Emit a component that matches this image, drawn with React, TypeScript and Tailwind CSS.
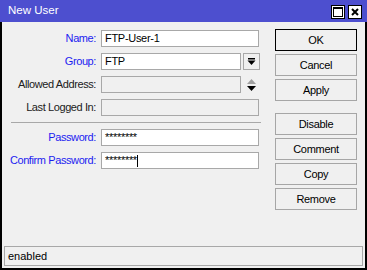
import React from "react"

const font = { fontFamily: '"Liberation Sans", Arial, sans-serif' }

function Field({
  label,
  blue,
  value,
  disabled,
  trailing,
  caret,
}: {
  label: string
  blue?: boolean
  value?: string
  disabled?: boolean
  trailing?: React.ReactNode
  caret?: boolean
}) {
  return (
    <div className="flex items-center h-[17px]">
      <div
        className={`w-[97px] pr-[3px] text-right text-[11px] tracking-[-0.4px] ${
          blue ? "text-[#1c1cf0]" : "text-[#202020]"
        }`}
      >
        {label}:
      </div>
      <div className="flex items-center ml-[2px] gap-[2px]">
        <div
          className={`h-[17px] ${trailing ? "w-[140px]" : "w-[158px]"} border border-[#a8a8a8] flex items-center px-[3px] text-[11px] tracking-[-0.3px] text-black ${
            disabled ? "bg-[#f0f0f0]" : "bg-white"
          }`}
        >
          <span>{value}</span>
          {caret && <span className="inline-block w-px h-[12px] bg-black" />}
        </div>
        {trailing}
      </div>
    </div>
  )
}

function Btn({ label, primary }: { label: string; primary?: boolean }) {
  return (
    <div
      className={`h-[22px] w-[82px] flex items-center justify-center text-[11px] tracking-[-0.3px] text-black bg-[#f0f0f0] border ${
        primary ? "border-black border-[1.5px]" : "border-[#a6a6a6]"
      }`}
    >
      {label}
    </div>
  )
}

export default function App() {
  return (
    <div className="w-[367px] h-[270px] flex flex-col bg-white" style={font}>
      {/* title bar */}
      <div className="h-[22px] bg-[#4d4fcf] flex items-center justify-between pl-[8px] pr-[5px]">
        <span className="text-white text-[11.5px]">New User</span>
        <div className="flex gap-[3px] pt-px">
          <div className="w-[14px] h-[14px] bg-white border border-black flex items-center justify-center">
            <div className="w-[10px] h-[10px] border border-black border-t-2" />
          </div>
          <div className="w-[14px] h-[14px] bg-white border border-black flex items-center justify-center">
            <svg width="8" height="8" viewBox="0 0 8 8">
              <path d="M1 1 L7 7 M7 1 L1 7" stroke="#000" strokeWidth="2" />
            </svg>
          </div>
        </div>
      </div>

      {/* body */}
      <div className="flex-1 flex flex-col bg-[#f0f0f0] border-x-2 border-b-2 border-black">
        <div className="flex-1 flex">
          {/* form */}
          <div className="flex flex-col pt-[8px] w-[273px]">
            <div className="flex flex-col gap-[6px]">
              <Field label="Name" blue value="FTP-User-1" />
              <Field
                label="Group"
                blue
                value="FTP"
                trailing={
                  <div className="w-[17px] h-[17px] border border-[#a8a8a8] bg-[#f0f0f0] flex items-center justify-center">
                    <svg width="9" height="9" viewBox="0 0 9 9">
                      <rect x="1" y="1" width="7" height="1.5" fill="#000" />
                      <path d="M0.5 3.5 L8.5 3.5 L4.5 8 Z" fill="#000" />
                    </svg>
                  </div>
                }
              />
              <Field
                label="Allowed Address"
                disabled
                trailing={
                  <div className="w-[17px] h-[17px] flex items-center justify-center">
                    <svg width="11" height="14" viewBox="0 0 11 14">
                      <path d="M1 6 L10 6 L5.5 1 Z" fill="#a0a0a0" />
                      <path d="M1 8 L10 8 L5.5 13 Z" fill="#000" />
                    </svg>
                  </div>
                }
              />
              <Field label="Last Logged In" disabled />
            </div>
            <div className="ml-[9px] w-[250px] h-px bg-[#a8a8a8] mt-[6px] mb-[6px]" />
            <div className="flex flex-col gap-[6px]">
              <Field label="Password" blue value="********" />
              <Field label="Confirm Password" blue value="********" caret />
            </div>
          </div>

          {/* buttons */}
          <div className="flex flex-col pt-[7px] gap-[3px]">
            <Btn label="OK" primary />
            <Btn label="Cancel" />
            <Btn label="Apply" />
            <div className="h-[6px]" />
            <Btn label="Disable" />
            <Btn label="Comment" />
            <Btn label="Copy" />
            <Btn label="Remove" />
          </div>
        </div>

        {/* status bar */}
        <div className="mx-[2px] mb-[2px] h-[20px] border border-[#a8a8a8] flex items-center px-[3px] text-[11px] text-black">
          enabled
        </div>
      </div>
    </div>
  )
}
